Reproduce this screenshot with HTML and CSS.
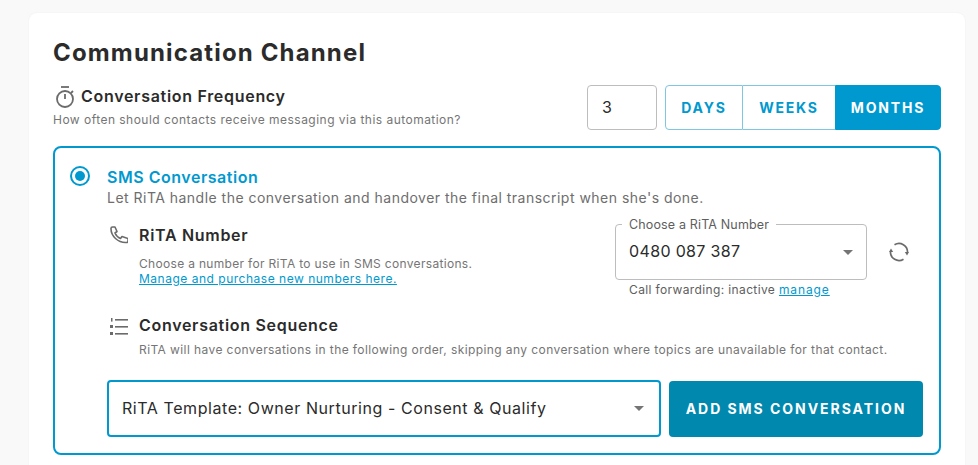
FILE: index.html
```html
<!DOCTYPE html>
<html lang="en">
<head>
<meta charset="utf-8">
<title>Communication Channel</title>
<link rel="stylesheet" href="styles.css">
</head>
<body>
<main class="card">
  <h1 class="title">Communication Channel</h1>
  <section class="freq">
    <div class="freq-text">
      <div class="freq-head">
        <svg class="icon-timer" viewBox="0 0 24 24" fill="none" stroke="#6b6b6b" stroke-width="1.8"><path d="M8 3h8"/><circle cx="12" cy="15" r="8"/><path d="M12 10v5"/><path d="M18 9l2-2"/></svg>
        <h2 class="h2 freq-title">Conversation Frequency</h2>
      </div>
      <p class="freq-sub">How often should contacts receive messaging via this automation?</p>
    </div>
    <div class="freq-controls">
      <div class="num-input">3</div>
      <div class="btn-group">
        <button class="seg seg-days">DAYS</button>
        <button class="seg seg-weeks">WEEKS</button>
        <button class="seg seg-months">MONTHS</button>
      </div>
    </div>
  </section>
  <section class="box">
    <div class="radio"><span class="radio-dot"></span></div>
    <div class="box-body">
      <h3 class="sms-title">SMS Conversation</h3>
      <p class="sms-sub">Let RiTA handle the conversation and handover the final transcript when she's done.</p>
      <div class="number-row">
        <svg class="row-icon icon-phone" viewBox="0 0 18 18" fill="none" stroke="#6b6b6b" stroke-width="1.6" stroke-linejoin="round"><path d="M1 2.500c0-1 .8-1.500 1.500-1.500h2.500l2 4.500-2 1.500c1 2.500 3 4.500 5.500 5.500l1.500-2 6 2v2.500c0 1-.7 1.500-1.500 1.500C8 17 .8 10 1 2.500z"/></svg>
        <div class="number-text">
          <h2 class="h2">RiTA Number</h2>
          <p class="small number-desc">Choose a number for RiTA to use in SMS conversations.<br><a class="link link-wide" href="#">Manage and purchase new numbers here.</a></p>
        </div>
        <div class="number-field">
          <div class="outlined">
            <span class="legend">Choose a RiTA Number</span>
            <span class="value">0480 087 387</span>
            <span class="caret"></span>
          </div>
          <p class="forward">Call forwarding: inactive <a class="link link-manage" href="#">manage</a></p>
        </div>
        <svg class="icon-refresh" viewBox="0 0 20 20" fill="none" stroke="#6b6b6b" stroke-width="1.7"><path d="M5.500 2.800A8.500 8.500 0 0 1 18.500 10.500"/><path d="M14.500 17.200A8.500 8.500 0 0 1 1.500 9.500"/><path d="M15.800 10H20l-2 3.500z" fill="#6b6b6b" stroke="none"/><path d="M0 10h4.200L2 6.500z" fill="#6b6b6b" stroke="none"/></svg>
      </div>
      <div class="seq-row">
        <svg class="row-icon icon-list" viewBox="0 0 18 18"><g fill="#6b6b6b"><rect x="5" y="1" width="13" height="1.600"/><rect x="5" y="8" width="13" height="1.600"/><rect x="5" y="15" width="13" height="1.600"/><rect x="1" y="0" width="1.500" height="3.600"/><rect x="0" y="7" width="3" height="3"/><rect x="0" y="14" width="3" height="3"/></g></svg>
        <div>
          <h2 class="h2">Conversation Sequence</h2>
          <p class="small seq-desc">RiTA will have conversations in the following order, skipping any conversation where topics are unavailable for that contact.</p>
        </div>
      </div>
      <div class="add-row">
        <div class="template"><span class="template-value">RiTA Template: Owner Nurturing - Consent &amp; Qualify</span><span class="caret"></span></div>
        <button class="add-btn">ADD SMS CONVERSATION</button>
      </div>
    </div>
  </section>
</main>
</body>
</html>
```
FILE: styles.css
```css
* { box-sizing: border-box; }
html, body { height: 100%; overflow: hidden; }
body { margin: 0; background: #f9f9f9; font-family: Inter, "Noto Sans", sans-serif; color: #2b2b2b; }
h1, h2, h3, p { margin: 0; }
.card { margin: 13px 13px 0 29px; background: #fff; border-radius: 8px; padding: 24px 24px 40px; height: 520px; box-shadow: 0 0 2px rgba(0,0,0,.06); }
.title { font-size: 24px; line-height: 32px; font-weight: 700; letter-spacing: 1.15px; }
.freq { display: flex; justify-content: space-between; margin-top: 16px; height: 46px; }
.freq-head { display: flex; align-items: center; gap: 4px; }
.icon-timer { width: 24px; height: 24px; margin-top: -1px; }
.h2 { font-size: 16px; line-height: 20px; font-weight: 600; letter-spacing: .7px; }
.freq-title { padding-bottom: 2px; }
.freq-sub { font-size: 12px; line-height: 16px; color: #757575; margin-top: 4px; letter-spacing: .47px; }
.freq-controls { display: flex; gap: 8px; }
.num-input { width: 70px; height: 45px; border: 1px solid #bdbdbd; border-radius: 4px; font-size: 16px; line-height: 43px; padding-left: 14px; }
.btn-group { display: flex; height: 45px; }
.seg { height: 45px; font-family: inherit; font-size: 14px; font-weight: 700; letter-spacing: 1.8px; color: #0099cf; background: #fff; border: 1px solid #7fc6e3; padding: 0; }
.seg-days { width: 78px; border-radius: 4px 0 0 4px; }
.seg-weeks { width: 92px; border-left: 0; border-right: 0; }
.seg-months { width: 106px; background: #0099cf; border-color: #0099cf; color: #fff; border-radius: 0 4px 4px 0; }
.box { display: flex; margin-top: 15px; border: 2px solid #0099cf; border-radius: 8px; height: 309px; padding: 15px 16px 0 15px; }
.radio { width: 20px; height: 20px; flex: none; border: 2px solid #0099cf; border-radius: 50%; display: flex; align-items: center; justify-content: center; margin-top: 3px; }
.radio-dot { width: 10px; height: 10px; background: #0099cf; border-radius: 50%; }
.box-body { margin-left: 17px; flex: 1; min-width: 0; }
.sms-title { font-size: 16px; line-height: 20px; font-weight: 600; color: #0099cf; letter-spacing: .52px; margin-top: 4px; }
.sms-sub { font-size: 14px; line-height: 20px; color: #6e6e6e; margin-top: 1px; letter-spacing: .48px; }
.number-row { display: flex; margin-top: 18px; height: 81px; }
.row-icon { width: 18px; height: 18px; flex: none; margin: 3px 11px 0 3px; }
.icon-phone { margin-top: 0; }
.number-text { flex: 1; min-width: 0; margin-top: -1px; }
.small { font-size: 12px; line-height: 15px; color: #757575; letter-spacing: .32px; }
.number-desc { margin-top: 11px; }
.link { color: #0099cf; text-decoration: underline; }
.link-wide { letter-spacing: .51px; }
.link-manage { letter-spacing: .9px; }
.number-field { width: 252px; flex: none; margin-top: -2px; }
.outlined { position: relative; height: 56px; border: 1px solid #bdbdbd; border-radius: 4px; display: flex; align-items: center; justify-content: space-between; padding: 0 13px; }
.legend { position: absolute; top: -8px; left: 6px; background: #fff; padding: 0 7px; font-size: 12.5px; line-height: 15px; color: #5e5e5e; letter-spacing: .15px; }
.value { font-size: 16px; letter-spacing: .35px; padding-bottom: 2px; }
.caret { width: 0; height: 0; border-left: 5px solid transparent; border-right: 5px solid transparent; border-top: 5px solid #757575; }
.forward { font-size: 12px; line-height: 16px; color: #5e5e5e; margin: 2px 0 0 14px; letter-spacing: .37px; }
.icon-refresh { width: 20px; height: 20px; flex: none; margin: 16px 14px 0 22px; }
.seq-row { display: flex; margin-top: 8px; }
.seq-desc { margin-top: 7px; letter-spacing: .41px; }
.add-row { display: flex; gap: 8px; margin-top: 23px; }
.template { width: 554px; height: 57px; border: 2px solid #0099cf; border-radius: 4px; display: flex; align-items: center; justify-content: space-between; padding: 0 15px 0 13px; }
.template-value { font-size: 16px; letter-spacing: .57px; padding-bottom: 2px; }
.add-btn { width: 254px; height: 56px; margin-top: 1px; background: #0088ae; border: 0; border-radius: 4px; color: #fff; font-family: inherit; font-size: 14px; font-weight: 700; letter-spacing: 1.95px; padding: 0 0 2px; }
```
